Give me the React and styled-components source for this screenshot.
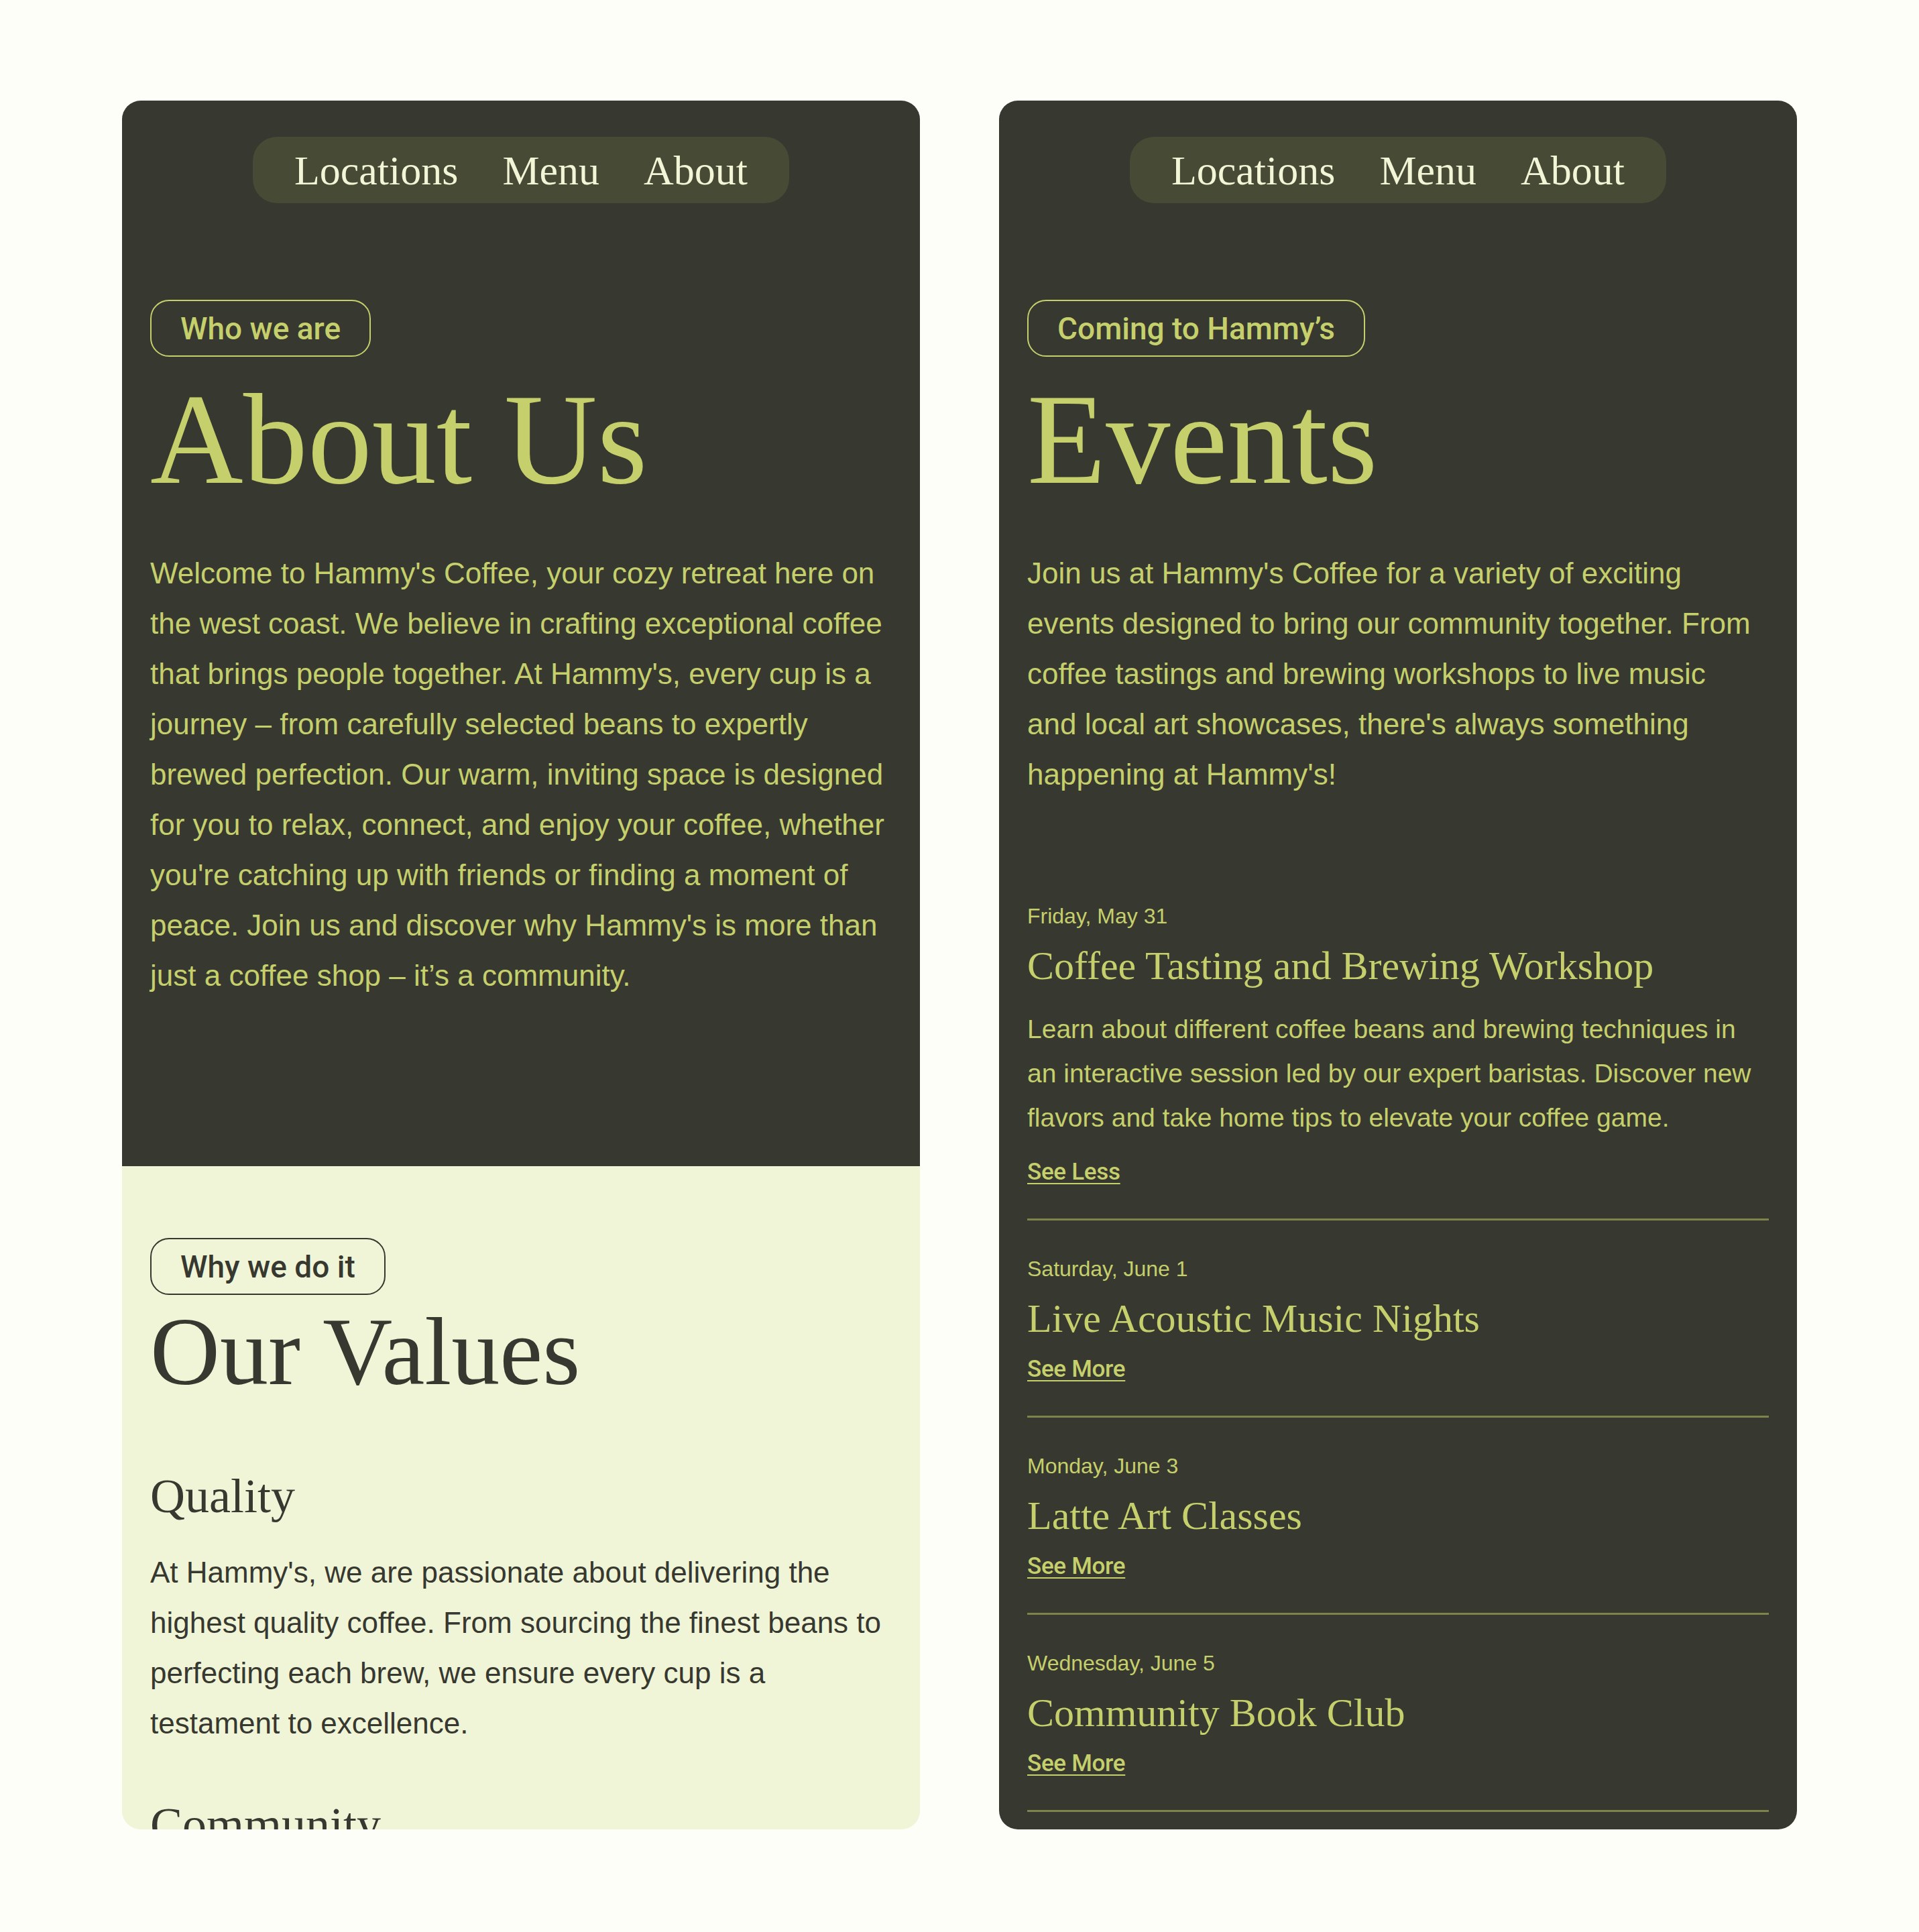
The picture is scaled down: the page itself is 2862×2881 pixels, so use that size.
import React from "react"
import styled, { createGlobalStyle } from "styled-components"

const lime = "#c5cf6b"
const ink = "#37382f"
const cream = "#f1f5d7"

const events = [
  {
    date: "Friday, May 31",
    title: "Coffee Tasting and Brewing Workshop",
    text: "Learn about different coffee beans and brewing techniques in an interactive session led by our expert baristas. Discover new flavors and take home tips to elevate your coffee game.",
    open: true
  },
  { date: "Saturday, June 1", title: "Live Acoustic Music Nights" },
  { date: "Monday, June 3", title: "Latte Art Classes" },
  { date: "Wednesday, June 5", title: "Community Book Club" }
]

const values = [
  {
    title: "Quality",
    text: "At Hammy's, we are passionate about delivering the highest quality coffee. From sourcing the finest beans to perfecting each brew, we ensure every cup is a testament to excellence."
  },
  {
    title: "Community",
    text: "We believe coffee brings people together, and we are proud to be a place where neighbours meet, share stories and feel at home."
  }
]

const NavBar = () => (
  <Nav>
    <NavLink>Locations</NavLink>
    <NavLink>Menu</NavLink>
    <NavLink>About</NavLink>
  </Nav>
)

export default function App() {
  return (
    <>
      <GlobalStyle />
      <Page>
        {/* about page, mobile */}
        <Card $bg={cream}>
          <DarkSection>
            <NavBar />
            <Badge>Who we are</Badge>
            <Heading>About Us</Heading>
            <Body>
              Welcome to Hammy's Coffee, your cozy retreat here on the west coast. We believe in crafting
              exceptional coffee that brings people together. At Hammy's, every cup is a journey – from
              carefully selected beans to expertly brewed perfection. Our warm, inviting space is designed
              for you to relax, connect, and enjoy your coffee, whether you're catching up with friends or
              finding a moment of peace. Join us and discover why Hammy's is more than just a coffee shop –
              it’s a community.
            </Body>
          </DarkSection>
          <LightSection>
            <Badge $dark>Why we do it</Badge>
            <SubHeading>Our Values</SubHeading>
            <ValueList>
              {values.map(v => (
                <div key={v.title}>
                  <ValueTitle>{v.title}</ValueTitle>
                  <Body $dark $top={33}>{v.text}</Body>
                </div>
              ))}
            </ValueList>
          </LightSection>
        </Card>

        {/* events page, mobile */}
        <Card $bg={ink}>
          <DarkSection>
            <NavBar />
            <Badge>Coming to Hammy’s</Badge>
            <Heading>Events</Heading>
            <Body $width={1086}>
              Join us at Hammy's Coffee for a variety of exciting events designed to bring our community
              together. From coffee tastings and brewing workshops to live music and local art showcases,
              there's always something happening at Hammy's!
            </Body>
            <EventList>
              {events.map(e => (
                <EventItem key={e.title}>
                  <EventDate>{e.date}</EventDate>
                  <EventTitle>{e.title}</EventTitle>
                  {e.open && <EventText>{e.text}</EventText>}
                  <ToggleLink href="#">{e.open ? "See Less" : "See More"}</ToggleLink>
                </EventItem>
              ))}
            </EventList>
          </DarkSection>
        </Card>
      </Page>
    </>
  )
}

const GlobalStyle = createGlobalStyle`
  html, body {
    margin: 0;
    padding: 0;
    background: #fdfef8;
  }
  body {
    font-family: "Liberation Sans", Arial, sans-serif;
  }
`

const Page = styled.div`
  display: flex;
  justify-content: center;
  align-items: flex-start;
  gap: 118px;
  padding: 150px 182px 153px;
  box-sizing: border-box;
`

const Card = styled.div`
  width: 1190px;
  height: 2578px;
  flex-shrink: 0;
  border-radius: 28px;
  overflow: hidden;
  background: ${p => p.$bg};
  display: flex;
  flex-direction: column;
`

const DarkSection = styled.section`
  background: ${ink};
  padding: 54px 42px 247px;
  display: flex;
  flex-direction: column;
  align-items: flex-start;
`

const LightSection = styled.section`
  background: ${cream};
  padding: 107px 42px 0;
  display: flex;
  flex-direction: column;
  align-items: flex-start;
`

const Nav = styled.nav`
  align-self: center;
  display: flex;
  align-items: center;
  gap: 66px;
  height: 99px;
  padding: 0 62px;
  border-radius: 36px;
  background: #474a34;
`

const NavLink = styled.a`
  font-family: "Liberation Serif", "Times New Roman", serif;
  font-size: 62px;
  line-height: 1;
  color: #f2f5d6;
  cursor: pointer;
`

const Badge = styled.span`
  margin-top: ${p => (p.$dark ? 0 : 144)}px;
  display: inline-flex;
  align-items: center;
  height: 85px;
  box-sizing: border-box;
  padding: 0 43px;
  border: 2px solid ${p => (p.$dark ? ink : lime)};
  border-radius: 28px;
  font-family: Roboto, "Liberation Sans", sans-serif;
  font-weight: 500;
  font-size: 46px;
  color: ${p => (p.$dark ? ink : lime)};
`

const Heading = styled.h1`
  margin: 28px 0 0;
  font-family: "Liberation Serif", "Times New Roman", serif;
  font-weight: 400;
  font-size: 192px;
  line-height: 1;
  color: ${lime};
`

const SubHeading = styled.h2`
  margin: 13px 0 0;
  font-family: "Liberation Serif", "Times New Roman", serif;
  font-weight: 400;
  font-size: 144px;
  line-height: 1;
  color: ${ink};
`

const Body = styled.p`
  margin: ${p => p.$top ?? 65}px 0 0;
  max-width: ${p => p.$width ?? 1106}px;
  font-size: 44px;
  line-height: 75px;
  color: ${p => (p.$dark ? ink : lime)};
`

const ValueList = styled.div`
  margin-top: 100px;
  display: flex;
  flex-direction: column;
  gap: 71px;
`

const ValueTitle = styled.h3`
  margin: 0;
  font-family: "Liberation Serif", "Times New Roman", serif;
  font-weight: 400;
  font-size: 72px;
  line-height: 1.2;
  color: ${ink};
`

const EventList = styled.div`
  margin-top: 102px;
  align-self: stretch;
  display: flex;
  flex-direction: column;
`

const EventItem = styled.article`
  padding: 52px 0 47px;
  border-bottom: 3px solid #7e8449;
  display: flex;
  flex-direction: column;
  align-items: flex-start;
  gap: 18px;
`

const EventDate = styled.div`
  font-size: 32px;
  line-height: 40px;
  color: ${lime};
`

const EventTitle = styled.h3`
  margin: 0;
  font-family: "Liberation Serif", "Times New Roman", serif;
  font-weight: 400;
  font-size: 60px;
  line-height: 72px;
  color: ${lime};
`

const EventText = styled.p`
  margin: 8px 0;
  max-width: 1092px;
  font-size: 39px;
  line-height: 66px;
  color: ${lime};
`

const ToggleLink = styled.a`
  font-family: Roboto, "Liberation Sans", sans-serif;
  font-weight: 500;
  font-size: 35px;
  line-height: 44px;
  letter-spacing: -0.3px;
  color: ${lime};
  text-decoration: underline;
  text-decoration-thickness: 2px;
  text-underline-offset: 5px;
`
